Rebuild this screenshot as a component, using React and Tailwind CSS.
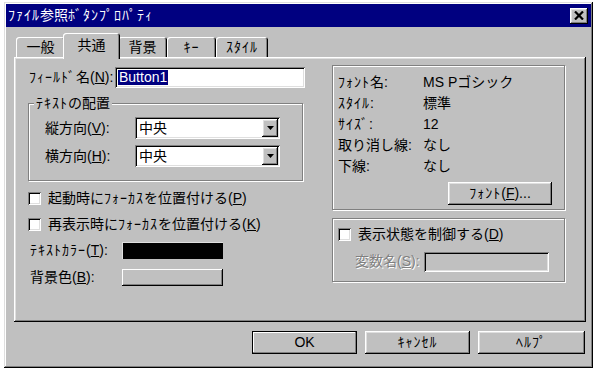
import React from 'react';

const raised = 'shadow-[inset_-1px_-1px_#000,inset_1px_1px_#fff,inset_-2px_-2px_#808080,inset_2px_2px_#dfdfdf]';
const sunken = 'shadow-[inset_1px_1px_#808080,inset_-1px_-1px_#fff,inset_2px_2px_#000,inset_-2px_-2px_#dfdfdf]';
const etched = 'border border-[#808080] shadow-[inset_1px_1px_#fff,1px_1px_#fff]';

const U = ({ children }) => <span className="underline underline-offset-[1px]">{children}</span>;
// half-width katakana run, spaced out a little like the old bitmap font
const K = ({ children }) => <span className="tracking-[1px]">{children}</span>;

const Checkbox = ({ disabled }) => (
    <span className={`inline-block w-[13px] h-[13px] shrink-0 ${disabled ? 'bg-[#c0c0c0]' : 'bg-white'} ${sunken}`} />
);

const Select = ({ value }) => (
    <div className={`w-[145px] h-[22px] bg-white ${sunken} flex items-center pl-[4px] pr-[2px]`}>
        <span className="flex-1">{value}</span>
        <span className={`w-[16px] h-[18px] bg-[#c0c0c0] ${raised} flex items-center justify-center`}>
            <svg width="7" height="4" viewBox="0 0 7 4">
                <path d="M0 0h7L3.5 4z" fill="#000" />
            </svg>
        </span>
    </div>
);

const Button = ({ children, isDefault, className = '' }) => (
    <button
        className={`h-[23px] bg-[#c0c0c0] flex items-center justify-center ${isDefault ? 'border border-black shadow-[inset_-1px_-1px_#808080,inset_1px_1px_#fff]' : raised} ${className}`}
    >
        {children}
    </button>
);

const Tab = ({ label, width, active }) => (
    <div
        className={`flex items-center justify-center rounded-t-[3px] bg-[#c0c0c0] shadow-[inset_1px_1px_#fff,inset_-1px_0_#000,inset_-2px_0_#808080] ${width} ${
            active ? 'h-[26px] -mb-[2px] relative z-10 -mx-[2px] pb-[2px]' : 'h-[20px]'
        }`}
    >
        {label}
    </div>
);

const FontRow = ({ label, value }) => (
    <div className="h-[21px] flex items-center">
        <span className="w-[85px]">{label}</span>
        <span>{value}</span>
    </div>
);

export default function App() {
    return (
        <div className="w-[599px] h-[372px] bg-white pt-[2px] pl-[4px] text-[14px] text-black [font-family:'Liberation_Sans','Noto_Sans_CJK_JP',sans-serif] overflow-hidden">
            <div className="w-[589px] h-[366px] bg-[#c0c0c0] p-[2px] shadow-[inset_-1px_-1px_#000,inset_1px_1px_#dfdfdf,inset_-2px_-2px_#808080,inset_2px_2px_#fff]">
                {/* Title bar */}
                <div className="h-[23px] bg-[#000080] flex items-center pl-[2px] pr-[3px]">
                    <span className="flex-1 text-white whitespace-nowrap">
                        <K>ﾌｧｲﾙ</K>参照<K>ﾎﾞﾀﾝﾌﾟﾛﾊﾟﾃｨ</K>
                    </span>
                    <span className={`w-[18px] h-[16px] bg-[#c0c0c0] ${raised} flex items-center justify-center`}>
                        <svg width="10" height="9" viewBox="0 0 10 9">
                            <path d="M1 0.5l8 8M9 0.5l-8 8" stroke="#000" strokeWidth="2.2" />
                        </svg>
                    </span>
                </div>

                <div className="pl-[8px]">
                    {/* Tabs */}
                    <div className="mt-[6px] h-[24px] flex items-end pl-[2px]">
                        <Tab label="一般" width="w-[49px]" />
                        <Tab label="共通" width="w-[57px]" active />
                        <Tab label="背景" width="w-[49px]" />
                        <Tab label={<K>ｷｰ</K>} width="w-[49px]" />
                        <Tab label={<K>ｽﾀｲﾙ</K>} width="w-[52px]" />
                    </div>

                    {/* Panel */}
                    <div className={`w-[572px] h-[265px] ${raised} flex pl-[14px]`}>
                        {/* Left column */}
                        <div className="w-[277px] pt-[10px] flex flex-col">
                            <div className="h-[21px] flex items-center">
                                <span className="w-[87px] pl-[1px] whitespace-nowrap"><K>ﾌｨｰﾙﾄﾞ</K>名(<U>N</U>):</span>
                                <div className={`w-[190px] h-[21px] bg-white ${sunken} flex items-center pl-[3px]`}>
                                    <span className="bg-[#000080] text-white px-[1px] leading-[15px]">Button1</span>
                                </div>
                            </div>

                            <div className={`relative mt-[15px] w-[275px] h-[78px] ${etched} pt-[13px] pl-[16px] flex flex-col gap-[6px]`}>
                                <span className="absolute -top-[9px] left-[5px] bg-[#c0c0c0] px-[2px] leading-[16px] whitespace-nowrap"><K>ﾃｷｽﾄ</K>の配置</span>
                                <div className="flex items-center">
                                    <span className="w-[90px]">縦方向(<U>V</U>):</span>
                                    <Select value="中央" />
                                </div>
                                <div className="flex items-center">
                                    <span className="w-[90px]">横方向(<U>H</U>):</span>
                                    <Select value="中央" />
                                </div>
                            </div>

                            <div className="mt-[11px] h-[13px] flex items-center gap-[7px] whitespace-nowrap">
                                <Checkbox />
                                <span>起動時に<K>ﾌｫｰｶｽ</K>を位置付ける(<U>P</U>)</span>
                            </div>
                            <div className="mt-[13px] h-[13px] flex items-center gap-[7px] whitespace-nowrap">
                                <Checkbox />
                                <span>再表示時に<K>ﾌｫｰｶｽ</K>を位置付ける(<U>K</U>)</span>
                            </div>

                            <div className="mt-[11px] h-[17px] flex items-center">
                                <span className="w-[94px] pl-[2px] whitespace-nowrap"><K>ﾃｷｽﾄｶﾗｰ</K>(<U>T</U>):</span>
                                <span className="w-[101px] h-[17px] bg-black border-t border-l border-[#dfdfdf]" />
                            </div>
                            <div className="mt-[10px] h-[17px] flex items-center">
                                <span className="w-[94px] pl-[2px]">背景色(<U>B</U>):</span>
                                <span className="w-[101px] h-[17px] bg-[#c0c0c0] shadow-[inset_-1px_-1px_#000,inset_1px_1px_#fff,inset_-2px_-2px_#808080]" />
                            </div>
                        </div>

                        {/* Right column */}
                        <div className="ml-[27px] w-[233px] pt-[8px] flex flex-col">
                            <div className={`h-[145px] ${etched} pt-[6px] pl-[5px] flex flex-col`}>
                                <FontRow label={<><K>ﾌｫﾝﾄ</K>名:</>} value="MS Pゴシック" />
                                <FontRow label={<><K>ｽﾀｲﾙ</K>:</>} value="標準" />
                                <FontRow label={<><K>ｻｲｽﾞ</K>:</>} value="12" />
                                <FontRow label="取り消し線:" value="なし" />
                                <FontRow label="下線:" value="なし" />
                                <Button className="mt-[5px] ml-[110px] w-[104px] h-[21px]"><K>ﾌｫﾝﾄ</K>(<U>F</U>)...</Button>
                            </div>

                            <div className={`mt-[8px] h-[64px] ${etched} pt-[8px] pl-[5px] flex flex-col`}>
                                <div className="h-[15px] flex items-center gap-[7px]">
                                    <Checkbox />
                                    <span>表示状態を制御する(<U>D</U>)</span>
                                </div>
                                <div className="mt-[9px] flex items-center">
                                    <span className="w-[86px] pl-[17px] whitespace-nowrap text-[#808080] [text-shadow:1px_1px_#fff]">変数名(<U>S</U>):</span>
                                    <span className={`w-[125px] h-[20px] bg-[#c0c0c0] ${sunken}`} />
                                </div>
                            </div>
                        </div>
                    </div>

                    {/* Buttons */}
                    <div className="mt-[9px] w-[571px] flex justify-end gap-[8px]">
                        <Button isDefault className="w-[105px]">OK</Button>
                        <Button className="w-[105px]"><K>ｷｬﾝｾﾙ</K></Button>
                        <Button className="w-[107px]"><K>ﾍﾙﾌﾟ</K></Button>
                    </div>
                </div>
            </div>
        </div>
    );
}
